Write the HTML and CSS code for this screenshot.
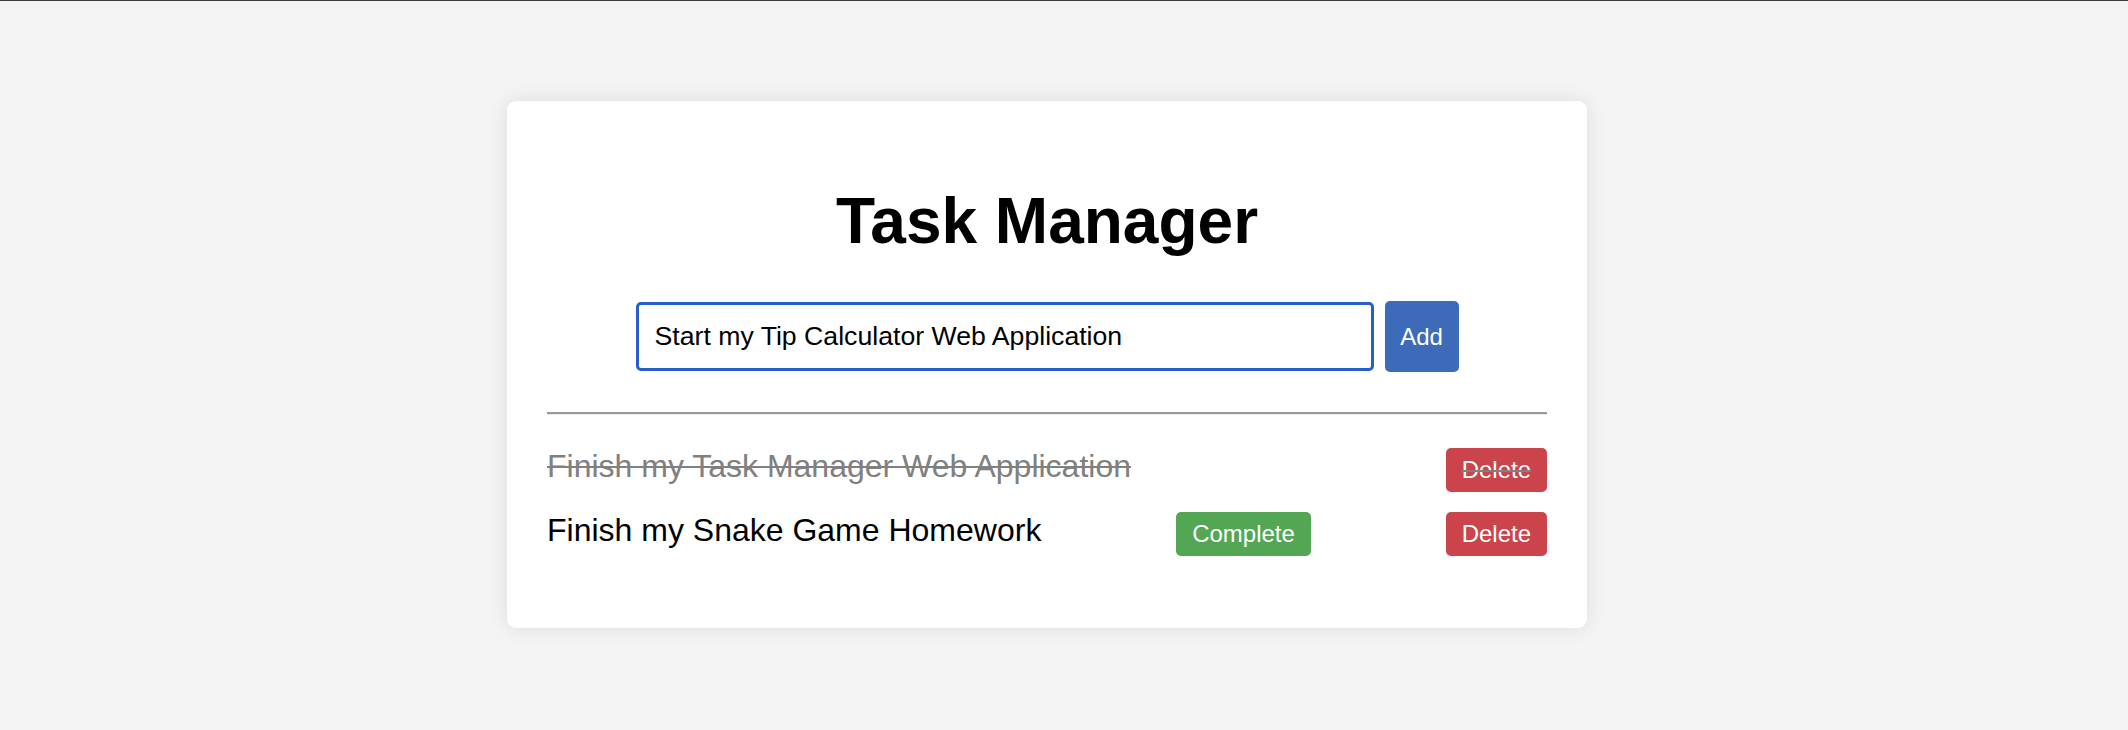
FILE: index.html
```html
<!DOCTYPE html>
<html lang="en">
<head>
<meta charset="utf-8">
<title>Task Manager</title>
<link rel="stylesheet" href="styles.css">
</head>
<body>
<div class="page">
  <main class="card">
    <h1 class="title">Task Manager</h1>
    <form class="add-form">
      <input class="task-input" type="text" value="Start my Tip Calculator Web Application">
      <button class="btn btn-add" type="button">Add</button>
    </form>
    <hr class="divider">
    <ul class="task-list">
      <li class="task done">
        <span class="task-text">Finish my Task Manager Web Application</span>
        <button class="btn btn-delete" type="button"><span class="struck">Delete</span></button>
      </li>
      <li class="task">
        <span class="task-text">Finish my Snake Game Homework</span>
        <button class="btn btn-complete" type="button">Complete</button>
        <button class="btn btn-delete" type="button">Delete</button>
      </li>
    </ul>
  </main>
</div>
</body>
</html>
```
FILE: styles.css
```css
html, body {
  margin: 0;
  padding: 0;
}
body {
  background: #f4f4f4;
  border-top: 1px solid #3c3c3c;
  font-family: "Liberation Sans", Arial, Helvetica, sans-serif;
  color: #000;
  min-height: 729px;
  box-sizing: border-box;
}
.page {
  display: flex;
  justify-content: center;
  padding: 100px 34px 0 0;
}
.card {
  width: 1080px;
  box-sizing: border-box;
  background: #fff;
  border-radius: 9px;
  padding: 40px;
  box-shadow: 0 0 20px rgba(0, 0, 0, 0.1);
}
.title {
  margin: 43px 0;
  font-size: 64px;
  font-weight: bold;
  text-align: center;
  line-height: normal;
}
.add-form {
  display: flex;
  justify-content: center;
  align-items: center;
  gap: 11px;
  margin: 0;
}
.task-input {
  width: 738px;
  height: 69px;
  box-sizing: border-box;
  border: 3px solid #285ecb;
  border-radius: 5px;
  padding: 0 16px;
  font-family: "Liberation Sans", Arial, Helvetica, sans-serif;
  font-size: 26.67px;
  color: #000;
  outline: none;
}
.btn {
  border: none;
  border-radius: 5px;
  color: #fff;
  font-family: "Liberation Sans", Arial, Helvetica, sans-serif;
  font-size: 24px;
  padding: 0 16px;
  height: 44px;
  cursor: pointer;
}
.btn-add {
  height: 71px;
  width: 74px;
  padding: 0;
  background: #3d6bb9;
}
.btn-complete {
  background: #53a653;
}
.btn-delete {
  background: #cb444b;
}
.divider {
  margin: 40px 0 0;
  border: 0;
  border-top: 2px solid #9a9a9a;
  border-bottom: 1px solid #ececec;
  height: 0;
}
.task-list {
  list-style: none;
  margin: 33px 0 32px;
  padding: 0;
  display: flex;
  flex-direction: column;
  gap: 20px;
}
.task {
  display: flex;
  justify-content: space-between;
  align-items: flex-start;
}
.task-text {
  font-size: 32px;
  line-height: 37px;
}
.task.done .task-text {
  color: #808080;
  text-decoration: line-through;
  text-decoration-thickness: 2px;
}
.struck {
  text-decoration: line-through;
  text-decoration-color: #808080;
  text-decoration-thickness: 2px;
}
```
